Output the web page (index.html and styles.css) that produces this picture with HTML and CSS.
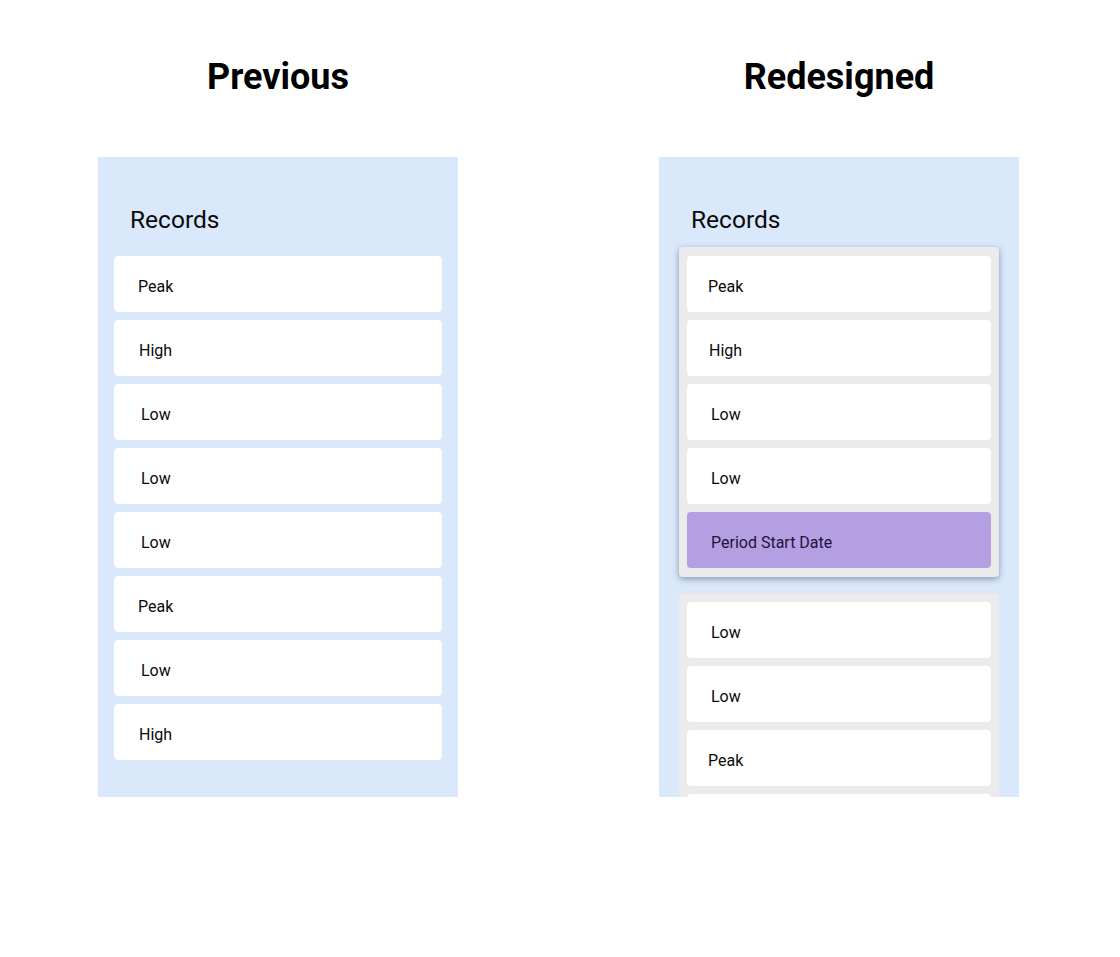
FILE: index.html
```html
<!DOCTYPE html>
<html lang="en">
<head>
<meta charset="utf-8">
<title>Previous vs Redesigned</title>
<link rel="stylesheet" href="styles.css">
</head>
<body>
<main class="compare">
  <section class="column">
    <h1 class="column-title">Previous</h1>
    <div class="panel">
      <h2 class="panel-title">Records</h2>
      <ul class="list list--plain">
        <li class="card card--p">Peak</li>
        <li class="card card--h">High</li>
        <li class="card card--l">Low</li>
        <li class="card card--l">Low</li>
        <li class="card card--l">Low</li>
        <li class="card card--p">Peak</li>
        <li class="card card--l">Low</li>
        <li class="card card--h">High</li>
      </ul>
    </div>
  </section>
  <section class="column column--new">
    <h1 class="column-title">Redesigned</h1>
    <div class="panel">
      <h2 class="panel-title">Records</h2>
      <div class="groups">
        <ul class="list group group--raised">
          <li class="card card--p">Peak</li>
          <li class="card card--h">High</li>
          <li class="card card--l">Low</li>
          <li class="card card--l">Low</li>
          <li class="card card--l card--accent">Period Start Date</li>
        </ul>
        <ul class="list group">
          <li class="card card--l">Low</li>
          <li class="card card--l">Low</li>
          <li class="card card--p">Peak</li>
          <li class="card" aria-hidden="true"></li>
        </ul>
      </div>
    </div>
  </section>
</main>
</body>
</html>
```

FILE: styles.css
```css
* { box-sizing: border-box; }

html, body {
  margin: 0;
  padding: 0;
  background: #ffffff;
  font-family: Roboto, "Liberation Sans", sans-serif;
  color: #000000;
}

.compare {
  display: flex;
  gap: 201px;
  padding-left: 98px;
  padding-top: 52px;
}

.column {
  width: 360px;
  display: flex;
  flex-direction: column;
  align-items: center;
}

.column-title {
  margin: 0;
  font-size: 36px;
  font-weight: 700;
  line-height: 50px;
  height: 55px;
}

.panel {
  margin-top: 50px;
  width: 360px;
  height: 640px;
  background: #dae8fc;
  overflow: hidden;
  padding-top: 49px;
}

.panel-title {
  margin: 0 0 13px 32px;
  font-size: 24.5px;
  font-weight: 400;
  line-height: 28px;
  color: #0a0a0a;
}

.list {
  list-style: none;
  margin: 0;
  display: flex;
  flex-direction: column;
  gap: 8px;
}

.list--plain {
  padding: 9px 16px 0;
}

.groups {
  display: flex;
  flex-direction: column;
  gap: 16px;
  padding: 0 20px;
}

.group {
  background: #ebebeb;
  border-radius: 4px;
  padding: 9px 8px;
}

.group--raised {
  box-shadow: 0 2px 6px rgba(40, 50, 80, 0.45);
}

.card {
  height: 56px;
  flex-shrink: 0;
  background: #ffffff;
  border-radius: 4px;
  display: flex;
  align-items: center;
  padding-top: 5px;
  padding-left: 24px;
  font-size: 16px;
  color: #0a0a0a;
}

.card--p { padding-left: 24px; }
.card--h { padding-left: 25px; }
.card--l { padding-left: 27px; }

.column--new .card--p { padding-left: 21px; }
.column--new .card--h { padding-left: 22px; }
.column--new .card--l { padding-left: 24px; }

.card--accent {
  background: #b49fe3;
  color: #21123f;
}
```
